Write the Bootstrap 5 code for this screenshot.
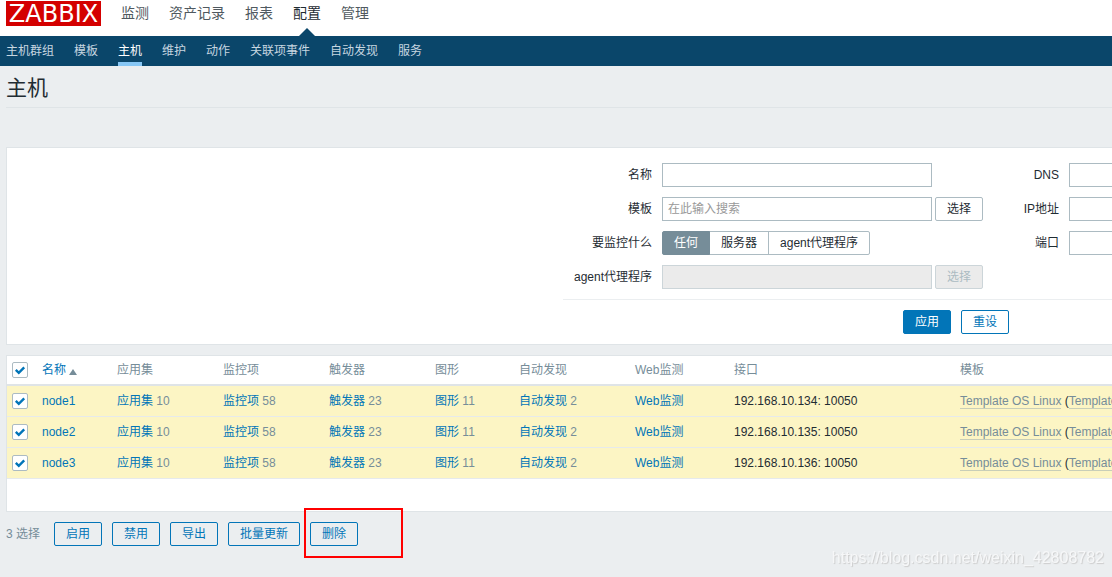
<!DOCTYPE html>
<html lang="zh-CN">
<head>
<meta charset="utf-8">
<meta name="viewport" content="width=device-width, initial-scale=1">
<title>Zabbix - 主机</title>
<link href="https://cdn.jsdelivr.net/npm/bootstrap@5.3.0/dist/css/bootstrap.min.css" rel="stylesheet">
<style>
  :root { --zbx-blue: #0275b8; --zbx-navy: #0a466a; --zbx-grey: #768d99; --zbx-line: #dfe4e7; --zbx-field: #acbbc2; }
  body { background: #ebeef0; color: #1f2c33; font: 12px/18px "Liberation Sans", "Noto Sans CJK SC", sans-serif; overflow-x: hidden; min-height: 100vh; }
  a { color: var(--zbx-blue); text-decoration: none; }

  .top-bar { height: 36px; padding: 1px 6px 0; gap: 20px; }
  .logo { background: #d40000; color: #fff; height: 25px; width: 95px; font: 24px/27px "DejaVu Sans", sans-serif; text-align: center; }
  .logo:hover { color: #fff; }
  .top-menu { gap: 20px; font-size: 14px; line-height: 24px; }
  .top-menu .nav-link { padding: 0; color: #4f5960; }
  .top-menu .nav-link.active { color: #1f2c33; height: 35px; }
  .top-menu .nav-link.active::after { content: ""; position: absolute; bottom: 0; left: 50%; margin-left: -8px; border: 8px solid transparent; border-top: 0; border-bottom-color: var(--zbx-navy); }
  .sub-menu { background: var(--zbx-navy); gap: 20px; height: 30px; padding: 0 6px; }
  .sub-menu .nav-link { padding: 0; color: #c7d6e0; line-height: 30px; height: 30px; white-space: nowrap; }
  .sub-menu .nav-link.active { color: #fff; box-shadow: inset 0 -4px #87c7f5; }

  .page-body { padding-left: 6px; }
  .page-title { font-size: 21px; line-height: 44px; height: 42px; margin: 0 0 39px; border-bottom: 1px solid var(--zbx-line); font-weight: 400; }
  .panel { background: #fff; border: 1px solid var(--zbx-line); border-right: 0; overflow: hidden; }
  .filter-form { margin-left: 50vw; width: 786px; padding-top: 15px; }
  .filter-cols { gap: 10px; padding-bottom: 10px; border-bottom: 1px solid #ebeef0; }
  .filter-grid { display: grid; gap: 10px; grid-template-columns: 89px auto; grid-auto-rows: 24px; align-items: center; }
  .filter-grid.narrow-labels { grid-template-columns: 66px auto; }
  .filter-grid > label, .group-label { text-align: right; white-space: nowrap; }
  .filter-actions { gap: 10px; padding: 10px 0; }
  .picker { gap: 3px; }
  .field { width: 270px; height: 24px; padding: 0 5px; border: 1px solid var(--zbx-field); border-radius: 0; font-size: 12px; color: #1f2c33; }
  .field::placeholder { color: #999; }
  .field:disabled { background: #ebebeb; border-color: #ccd5d9; }
  .btn { --bs-btn-padding-x: 11px; --bs-btn-padding-y: 0; --bs-btn-font-size: 12px; --bs-btn-line-height: 23px; --bs-btn-border-radius: 2px; white-space: nowrap; height: 24px; }
  .btn-zbx { --bs-btn-color: var(--zbx-blue); --bs-btn-border-color: var(--zbx-blue); --bs-btn-hover-color: #fff; --bs-btn-hover-bg: var(--zbx-blue); }
  .btn-apply { --bs-btn-color: #fff; --bs-btn-bg: var(--zbx-blue); --bs-btn-border-color: var(--zbx-blue); --bs-btn-hover-color: #fff; --bs-btn-hover-bg: #02659f; }
  .btn-plain { --bs-btn-color: #1f2c33; --bs-btn-border-color: var(--zbx-field); --bs-btn-active-color: #fff; --bs-btn-active-bg: var(--zbx-grey); --bs-btn-active-border-color: var(--zbx-grey); --bs-btn-disabled-color: #acbbc2; --bs-btn-disabled-bg: #ebebeb; --bs-btn-disabled-border-color: #ccd5d9; --bs-btn-disabled-opacity: 1; }
  .segments .btn { flex: none; }

  .host-panel { margin-top: 10px; padding-bottom: 32px; }
  .host-table { width: 1900px; table-layout: fixed; border-collapse: separate; border-spacing: 0; }
  .host-table th, .host-table td { padding: 0 5px; white-space: nowrap; vertical-align: middle; }
  .host-table th { height: 30px; border-bottom: 2px solid var(--zbx-line); font-weight: 400; color: var(--zbx-grey); }
  .host-table td { height: 31px; border-bottom: 1px solid #e6eaec; background: #fcf5c4; }
  .count { color: var(--zbx-grey); }
  .tpl { color: var(--zbx-grey); border-bottom: 1px solid #c8ceb8; }
  .sort-up { display: inline-block; border: 4px solid transparent; border-top: 0; border-bottom: 6px solid var(--zbx-grey); margin-left: 3px; vertical-align: -1px; }
  .tick { appearance: none; display: block; width: 16px; height: 16px; margin: 0; background: #fff; border: 1px solid var(--zbx-field); border-radius: 2px; }
  .tick:checked { background: #fff url("data:image/svg+xml,%3Csvg xmlns='http://www.w3.org/2000/svg' viewBox='0 0 14 14'%3E%3Cpath d='M2.8 6.8l3 3 5.4-5.4' fill='none' stroke='%230275b8' stroke-width='2.4'/%3E%3C/svg%3E"); }

  .actions { gap: 10px; margin-top: 10px; padding-bottom: 14px; }
  .selected-count { color: var(--zbx-grey); margin-right: 4px; }
  .callout-box { position: absolute; left: -6px; top: -14px; width: 99px; height: 50px; border: 2px solid #f00; pointer-events: none; }
  .watermark { position: fixed; right: 8px; bottom: 7px; font-size: 16px; line-height: 24px; color: #f6f7f8; text-shadow: 1px 1px 1px #ccc; pointer-events: none; }
</style>
</head>
<body>
<header>
  <div class="top-bar bg-white d-flex">
    <a class="logo" href="#">ZABBIX</a>
    <nav class="nav top-menu flex-nowrap" aria-label="主菜单">
      <a class="nav-link" href="#">监测</a>
      <a class="nav-link" href="#">资产记录</a>
      <a class="nav-link" href="#">报表</a>
      <a class="nav-link active position-relative" href="#">配置</a>
      <a class="nav-link" href="#">管理</a>
    </nav>
  </div>
  <nav class="nav sub-menu flex-nowrap" aria-label="配置">
    <a class="nav-link" href="#">主机群组</a>
    <a class="nav-link" href="#">模板</a>
    <a class="nav-link active" href="#">主机</a>
    <a class="nav-link" href="#">维护</a>
    <a class="nav-link" href="#">动作</a>
    <a class="nav-link" href="#">关联项事件</a>
    <a class="nav-link" href="#">自动发现</a>
    <a class="nav-link" href="#">服务</a>
  </nav>
</header>

<main class="page-body">
  <h1 class="page-title">主机</h1>

  <section class="panel">
    <form class="filter-form">
      <div class="filter-cols d-flex align-items-start">
        <div class="filter-grid">
          <label for="f-name">名称</label>
          <input class="field" id="f-name" type="text">
          <label for="f-tpl">模板</label>
          <div class="picker d-flex">
            <input class="field" id="f-tpl" type="text" placeholder="在此输入搜索">
            <button class="btn btn-plain" type="button">选择</button>
          </div>
          <span class="group-label" id="mon-label">要监控什么</span>
          <div class="btn-group segments justify-content-start" role="group" aria-labelledby="mon-label">
            <input class="btn-check" type="radio" name="mon" id="m-any" checked>
            <label class="btn btn-plain" for="m-any">任何</label>
            <input class="btn-check" type="radio" name="mon" id="m-server">
            <label class="btn btn-plain" for="m-server">服务器</label>
            <input class="btn-check" type="radio" name="mon" id="m-proxy">
            <label class="btn btn-plain" for="m-proxy">agent代理程序</label>
          </div>
          <label for="f-proxy">agent代理程序</label>
          <div class="picker d-flex">
            <input class="field" id="f-proxy" type="text" disabled>
            <button class="btn btn-plain" type="button" disabled>选择</button>
          </div>
        </div>
        <div class="filter-grid narrow-labels">
          <label for="f-dns">DNS</label>
          <input class="field" id="f-dns" type="text">
          <label for="f-ip">IP地址</label>
          <input class="field" id="f-ip" type="text">
          <label for="f-port">端口</label>
          <input class="field" id="f-port" type="text">
        </div>
      </div>
      <div class="filter-actions d-flex justify-content-center">
        <button class="btn btn-apply" type="submit">应用</button>
        <button class="btn btn-zbx" type="reset">重设</button>
      </div>
    </form>
  </section>

  <section class="panel host-panel">
    <table class="host-table">
      <colgroup>
        <col style="width:30px"><col style="width:75px"><col style="width:106px"><col style="width:106px"><col style="width:106px"><col style="width:84px"><col style="width:116px"><col style="width:99px"><col style="width:226px"><col>
      </colgroup>
      <thead>
        <tr>
          <th><input class="tick" type="checkbox" aria-label="全选" checked></th>
          <th><a href="#">名称<span class="sort-up"></span></a></th>
          <th>应用集</th><th>监控项</th><th>触发器</th><th>图形</th><th>自动发现</th><th>Web监测</th><th>接口</th><th>模板</th>
        </tr>
      </thead>
      <tbody>
        <tr>
          <td><input class="tick" type="checkbox" aria-label="node1" checked></td>
          <td><a href="#">node1</a></td>
          <td><a href="#">应用集</a> <span class="count">10</span></td>
          <td><a href="#">监控项</a> <span class="count">58</span></td>
          <td><a href="#">触发器</a> <span class="count">23</span></td>
          <td><a href="#">图形</a> <span class="count">11</span></td>
          <td><a href="#">自动发现</a> <span class="count">2</span></td>
          <td><a href="#">Web监测</a></td>
          <td>192.168.10.134: 10050</td>
          <td><a class="tpl" href="#">Template OS Linux</a> (<a class="tpl" href="#">Template App Zabbix Agent</a>)</td>
        </tr>
        <tr>
          <td><input class="tick" type="checkbox" aria-label="node2" checked></td>
          <td><a href="#">node2</a></td>
          <td><a href="#">应用集</a> <span class="count">10</span></td>
          <td><a href="#">监控项</a> <span class="count">58</span></td>
          <td><a href="#">触发器</a> <span class="count">23</span></td>
          <td><a href="#">图形</a> <span class="count">11</span></td>
          <td><a href="#">自动发现</a> <span class="count">2</span></td>
          <td><a href="#">Web监测</a></td>
          <td>192.168.10.135: 10050</td>
          <td><a class="tpl" href="#">Template OS Linux</a> (<a class="tpl" href="#">Template App Zabbix Agent</a>)</td>
        </tr>
        <tr>
          <td><input class="tick" type="checkbox" aria-label="node3" checked></td>
          <td><a href="#">node3</a></td>
          <td><a href="#">应用集</a> <span class="count">10</span></td>
          <td><a href="#">监控项</a> <span class="count">58</span></td>
          <td><a href="#">触发器</a> <span class="count">23</span></td>
          <td><a href="#">图形</a> <span class="count">11</span></td>
          <td><a href="#">自动发现</a> <span class="count">2</span></td>
          <td><a href="#">Web监测</a></td>
          <td>192.168.10.136: 10050</td>
          <td><a class="tpl" href="#">Template OS Linux</a> (<a class="tpl" href="#">Template App Zabbix Agent</a>)</td>
        </tr>
      </tbody>
    </table>
  </section>

  <div class="actions d-flex align-items-center">
    <span class="selected-count">3 选择</span>
    <button class="btn btn-zbx" type="button">启用</button>
    <button class="btn btn-zbx" type="button">禁用</button>
    <button class="btn btn-zbx" type="button">导出</button>
    <button class="btn btn-zbx" type="button">批量更新</button>
    <div class="position-relative d-flex">
      <button class="btn btn-zbx" type="button">删除</button>
      <span class="callout-box"></span>
    </div>
  </div>
</main>
<div class="watermark">https://blog.csdn.net/weixin_42808782</div>
</body>
</html>
